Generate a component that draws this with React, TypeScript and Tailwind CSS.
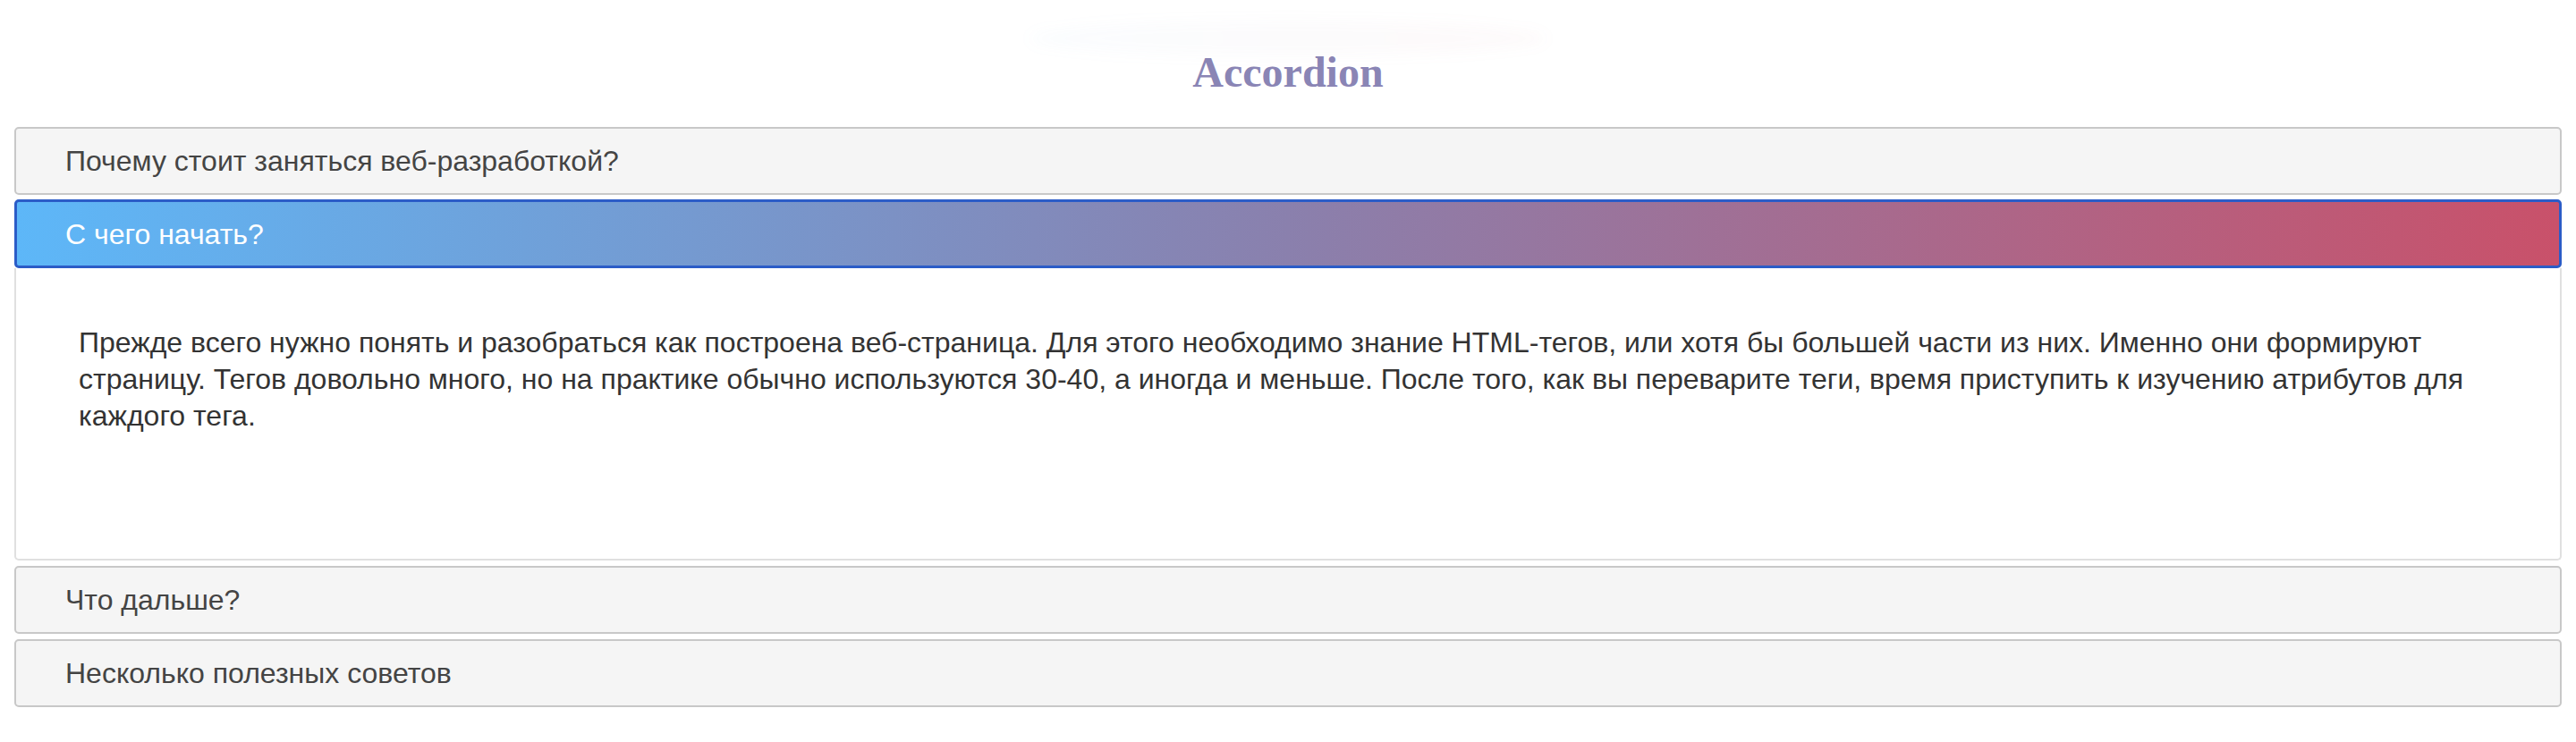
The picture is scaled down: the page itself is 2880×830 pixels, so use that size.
import React from "react";

const items = [
  "Почему стоит заняться веб-разработкой?",
  "С чего начать?",
  "Что дальше?",
  "Несколько полезных советов",
];

export default function App() {
  const active = 1;
  return (
    <div className="min-h-[830px] bg-white pt-[23px] font-['Liberation_Sans',Arial,sans-serif]">
      <div className="mx-auto h-[40px] w-[580px] -mb-[10px] rounded-[50%] bg-gradient-to-r from-[#5fb5f5]/[0.03] to-[#c9516a]/[0.03] blur-[8px]" />
      <h1 className="text-center text-[48px] font-bold leading-[55px] text-[#8a85b5] font-['Liberation_Serif','Times_New_Roman',serif]">
        Accordion
      </h1>
      <div className="mx-4 mt-[34px] flex flex-col">
        {items.map((t, i) =>
          i === active ? (
            <div key={i} className="mb-[6px] flex flex-col">
              <div className="flex h-[77px] items-center rounded-[5px] border-[3px] border-[#2b5cc7] bg-[linear-gradient(90deg,#5db7f8_0%,#8a80ad_50%,#c9516a_100%)] pl-[54px] text-[32px] text-white">
                {t}
              </div>
              <div className="h-[327px] rounded-b-[5px] border-2 border-t-0 border-[#e0e0e0] bg-white pl-[70px] pr-[70px] pt-[63px] text-[32px] leading-[41px] text-[#333]">
                Прежде всего нужно понять и разобраться как построена веб-страница. Для этого необходимо знание HTML-тегов, или хотя бы большей части из них. Именно они формируют страницу. Тегов довольно много, но на практике обычно используются 30-40, а иногда и меньше. После того, как вы переварите теги, время приступить к изучению атрибутов для каждого тега.
              </div>
            </div>
          ) : (
            <div
              key={i}
              className={
                i === 0
                  ? "mb-[5px] flex h-[76px] items-center rounded-[5px] border-2 border-[#c8c8c8] bg-[#f5f5f5] pl-[55px] text-[32px] text-[#444]"
                  : "mb-[6px] flex h-[76px] items-center rounded-[5px] border-2 border-[#c8c8c8] bg-[#f5f5f5] pl-[55px] text-[32px] text-[#444]"
              }
            >
              {t}
            </div>
          )
        )}
      </div>
    </div>
  );
}
